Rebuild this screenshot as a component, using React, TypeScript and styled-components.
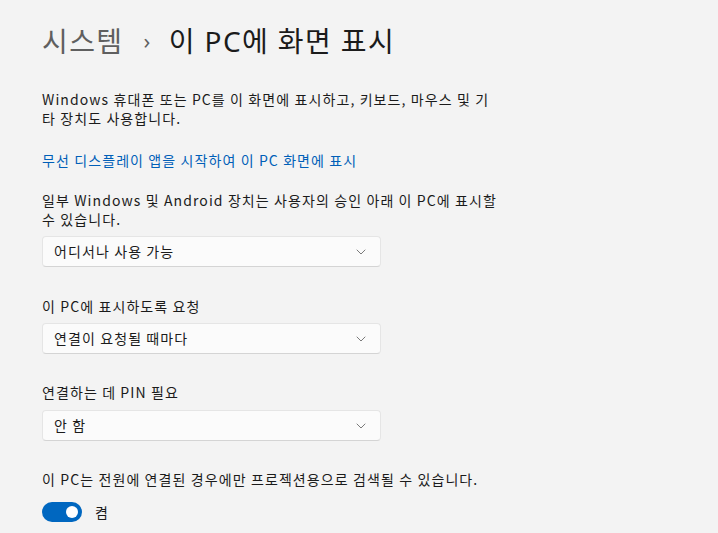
import React from "react";
import styled, { createGlobalStyle } from "styled-components";

const Global = createGlobalStyle`
  html, body { margin: 0; padding: 0; background: #f3f3f3; }
  body { font-family: "Noto Sans CJK KR", "Noto Sans", sans-serif; color: #1b1b1b; }
`;

const Page = styled.div`
  width: 718px;
  height: 533px;
  box-sizing: border-box;
  padding: 20px 0 0 42px;
  background: #f3f3f3;
  overflow: hidden;
  display: flex;
  flex-direction: column;
`;

const Title = styled.h1`
  margin: 0;
  font-weight: 400;
  font-size: 28px;
  line-height: 40px;
  letter-spacing: 1.4px;
  display: flex;
  align-items: center;
  font-family: "Noto Sans", "Noto Sans CJK KR", sans-serif;
`;

const Crumb = styled.span`
  color: #5f5f5f;
`;

const Sep = styled.span`
  color: #5f5f5f;
  font-size: 22px;
  margin: 0 17px 2px 20px;
`;

const Current = styled.span`
  color: #1b1b1b;
`;

const Content = styled.div`
  width: 458px;
  display: flex;
  flex-direction: column;
  font-family: "Noto Sans CJK KR", "Noto Sans", sans-serif;
  font-size: 14px;
  line-height: 19px;
  letter-spacing: 1.1px;
`;

const Para = styled.p<{ $top: number }>`
  margin: ${(p) => p.$top}px 0 0;
  font-size: 14px;
  line-height: 19px;
`;

const Link = styled.a`
  margin-top: 23px;
  color: #005fb8;
  font-size: 14px;
  line-height: 19px;
  text-decoration: none;
`;

const Select = styled.div<{ $top: number }>`
  margin-top: ${(p) => p.$top}px;
  width: 339px;
  height: 31px;
  box-sizing: border-box;
  background: #fbfbfb;
  border: 1px solid #e5e5e5;
  border-bottom-color: #d4d4d4;
  border-radius: 4px;
  display: flex;
  align-items: center;
  justify-content: space-between;
  padding: 0 14px 0 11px;
  font-size: 14px;
  color: #1b1b1b;
`;

const Chevron = () => (
  <svg width="10" height="6" viewBox="0 0 10 6">
    <path d="M1 1 L5 5 L9 1" fill="none" stroke="#7a7a7a" strokeWidth="1" strokeLinecap="round" strokeLinejoin="round" />
  </svg>
);

const ToggleRow = styled.div`
  margin-top: 13px;
  display: flex;
  align-items: center;
  gap: 13px;
  font-size: 14px;
`;

const Toggle = styled.div`
  width: 40px;
  height: 20px;
  border-radius: 10px;
  background: #0067c0;
  display: flex;
  align-items: center;
  justify-content: flex-end;
  padding-right: 4px;
  box-sizing: border-box;
`;

const Thumb = styled.div`
  width: 12px;
  height: 12px;
  border-radius: 50%;
  background: #ffffff;
`;

export default function App() {
  return (
    <>
      <Global />
      <Page>
        <Title>
          <Crumb>시스템</Crumb>
          <Sep>›</Sep>
          <Current>이 PC에 화면 표시</Current>
        </Title>
        <Content>
          <Para $top={28}>
            Windows 휴대폰 또는 PC를 이 화면에 표시하고, 키보드, 마우스 및 기타 장치도 사용합니다.
          </Para>
          <Link href="#">무선 디스플레이 앱을 시작하여 이 PC 화면에 표시</Link>
          <Para $top={21}>
            일부 Windows 및 Android 장치는 사용자의 승인 아래 이 PC에 표시할 수 있습니다.
          </Para>
          <Select $top={7}>
            <span>어디서나 사용 가능</span>
            <Chevron />
          </Select>
          <Para $top={30}>이 PC에 표시하도록 요청</Para>
          <Select $top={7}>
            <span>연결이 요청될 때마다</span>
            <Chevron />
          </Select>
          <Para $top={29}>연결하는 데 PIN 필요</Para>
          <Select $top={8}>
            <span>안 함</span>
            <Chevron />
          </Select>
          <Para $top={29}>이 PC는 전원에 연결된 경우에만 프로젝션용으로 검색될 수 있습니다.</Para>
          <ToggleRow>
            <Toggle>
              <Thumb />
            </Toggle>
            <span>켬</span>
          </ToggleRow>
        </Content>
      </Page>
    </>
  );
}
